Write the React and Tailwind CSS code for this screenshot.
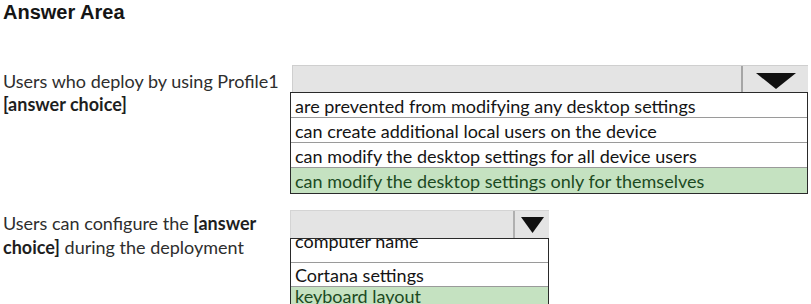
const first = [
  'are prevented from modifying any desktop settings',
  'can create additional local users on the device',
  'can modify the desktop settings for all device users',
  'can modify the desktop settings only for themselves',
];

function Arrow({ w, h }) {
  return (
    <svg width={w} height={h} viewBox={`0 0 ${w} ${h}`}>
      <polygon points={`0,0 ${w},0 ${w / 2},${h}`} fill="#111" />
    </svg>
  );
}

function Row({ children, picked, shift = 'pt-[2px]', tall }) {
  return (
    <div
      className={`${tall ? 'h-[25px]' : 'h-[24px]'} border-b border-[#9a9a9a] last:border-b-0 overflow-hidden pl-[4px] text-[18px] leading-[22px] ${
        picked ? 'bg-[#c5e2c1] text-[#1c4a1f]' : 'bg-white text-[#141414]'
      }`}
    >
      <div className={shift}>{children}</div>
    </div>
  );
}

export default function App() {
  return (
    <div
      className="w-[811px] h-[304px] overflow-hidden bg-white pl-[3px]"
      style={{ fontFamily: 'Lato, "Open Sans", sans-serif' }}
    >
      <h2
        className="h-[24px] text-[20px] leading-[24px] font-bold text-[#151515]"
        style={{ fontFamily: '"Liberation Sans", Arial, sans-serif' }}
      >
        Answer Area
      </h2>

      <div className="flex mt-[41px]">
        <div className="w-[287px] pt-[5px] text-[18px] leading-[23px] text-[#2e2e2e]">
          Users who deploy by using Profile1
          <br />
          <b className="text-[#1e1e1e]">[answer choice]</b>
        </div>
        <div>
          <div className="ml-[2px] w-[516px] h-[27px] flex bg-[#e4e4e4] border-t border-l border-[#cfcfcf]">
            <div className="flex-1 border-r-2 border-[#a5a5a5]" />
            <div className="w-[65px] flex items-center justify-center pt-[4px]">
              <Arrow w={40} h={16} />
            </div>
          </div>
          <div className="w-[518px] border border-[#2a2a2a]">
            {first.map((t, i) => (
              <Row key={t} picked={i === 3} tall>
                {t}
              </Row>
            ))}
          </div>
        </div>
      </div>

      <div className="flex mt-[16px]">
        <div className="w-[287px] pt-[1px] text-[18px] leading-[24px] text-[#2e2e2e]">
          Users can configure the <b className="text-[#1e1e1e]">[answer</b>
          <br />
          <b className="text-[#1e1e1e]">choice]</b> during the deployment
        </div>
        <div>
          <div className="w-[259px] h-[28px] flex bg-[#e4e4e4] border-t border-l border-[#d4d4d4]">
            <div className="flex-1 border-r-2 border-[#b0b0b0]" />
            <div className="w-[34px] flex items-center justify-center">
              <Arrow w={23} h={16} />
            </div>
          </div>
          <div className="w-[259px] border border-[#2a2a2a]">
            <Row shift="-mt-[9px]">computer name</Row>
            <Row shift="pt-[1px]">Cortana settings</Row>
            <Row picked shift="-mt-[2px]">keyboard layout</Row>
          </div>
        </div>
      </div>
    </div>
  );
}
